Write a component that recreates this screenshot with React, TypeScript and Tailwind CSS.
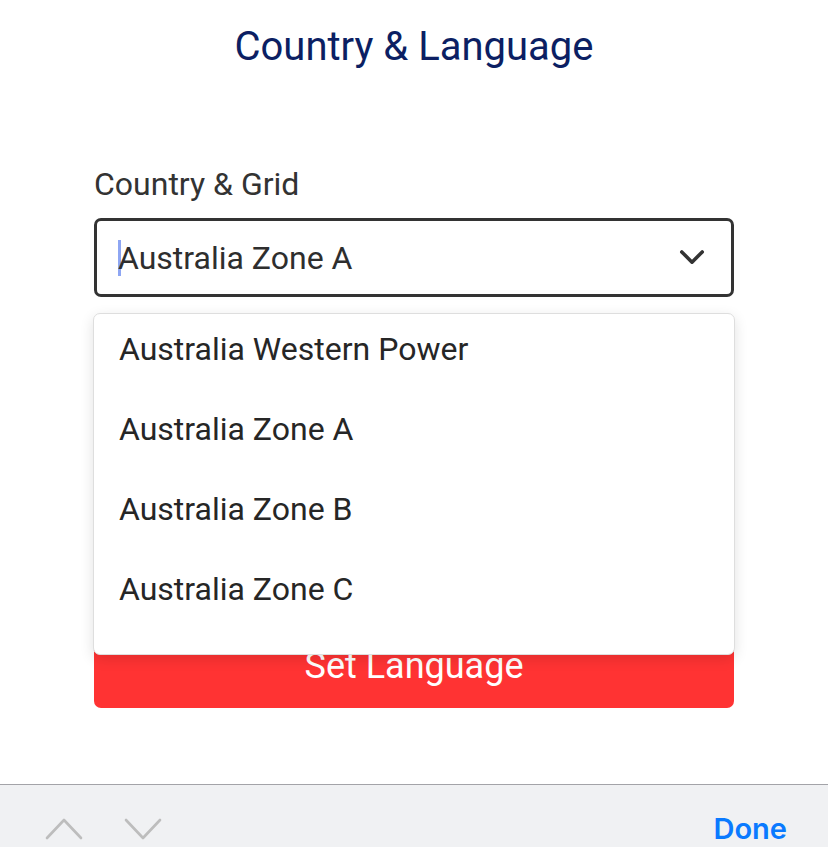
import React from "react";

const options = [
  "Australia Western Power",
  "Australia Zone A",
  "Australia Zone B",
  "Australia Zone C",
];

const ChevronDown = ({ className }: { className?: string }) => (
  <svg viewBox="0 0 28 18" className={className} fill="none">
    <polyline points="3,3 14,14 25,3" stroke="currentColor" strokeWidth="3.8" strokeLinecap="round" strokeLinejoin="round" />
  </svg>
);

export default function App() {
  return (
    <div className="flex h-[847px] w-[828px] flex-col overflow-hidden bg-white font-['Roboto',sans-serif]">
      <div className="flex-1 px-[94px]">
        <h1 className="pt-[24px] text-center text-[40px] leading-[46px] text-[#0c1f63]">Country &amp; Language</h1>

        <label className="mt-[94px] block text-[32px] leading-[40px] text-[#333333]">Country &amp; Grid</label>

        <div className="relative mt-[14px]">
          <div className="flex h-[79px] items-center rounded-[7px] border-[3px] border-[#333333] pl-[21px] pr-[26px]">
            <span className="h-[36px] w-[3px] bg-[#8ea6f3]" />
            <span className="-ml-[3px] flex-1 text-[32px] leading-[36px] text-[#2e2e2e]">Australia Zone A</span>
            <ChevronDown className="h-[17px] w-[26px] text-[#333333]" />
          </div>

          <div className="absolute left-[-1px] right-[-1px] top-[95px] z-10 rounded-[7px] border border-[#dedede] bg-white pb-[20px] shadow-[0_4px_14px_rgba(0,0,0,0.12)]">
            {options.map((o) => (
              <div key={o} className="flex h-[80px] items-center pb-[10px] pl-[25px] text-[32px] text-[#262626]">
                {o}
              </div>
            ))}
          </div>
        </div>

        <p className="mt-[70px] text-[22px] text-[#ff3333]">Please select</p>

        <button className="mt-[226px] flex h-[82px] w-full items-center justify-center rounded-[7px] bg-[#ff3333] pb-[2px] text-[36px] text-white">
          Set Language
        </button>
      </div>

      <div className="flex h-[63px] items-center border-t border-[#a3a3a8] bg-[#f0f1f3] pl-[45px] pr-[41px] pt-[26px]">
        <svg viewBox="0 0 38 22" className="h-[22px] w-[38px]" fill="none">
          <polyline points="2,20 19,2 36,20" stroke="#bdbdbd" strokeWidth="2.6" strokeLinecap="round" strokeLinejoin="round" />
        </svg>
        <svg viewBox="0 0 38 22" className="ml-[41px] h-[22px] w-[38px]" fill="none">
          <polyline points="2,2 19,20 36,2" stroke="#bdbdbd" strokeWidth="2.6" strokeLinecap="round" strokeLinejoin="round" />
        </svg>
        <span className="ml-auto font-['Inter',sans-serif] text-[29px] font-semibold leading-[34px] text-[#0a7aff]">Done</span>
      </div>
    </div>
  );
}
